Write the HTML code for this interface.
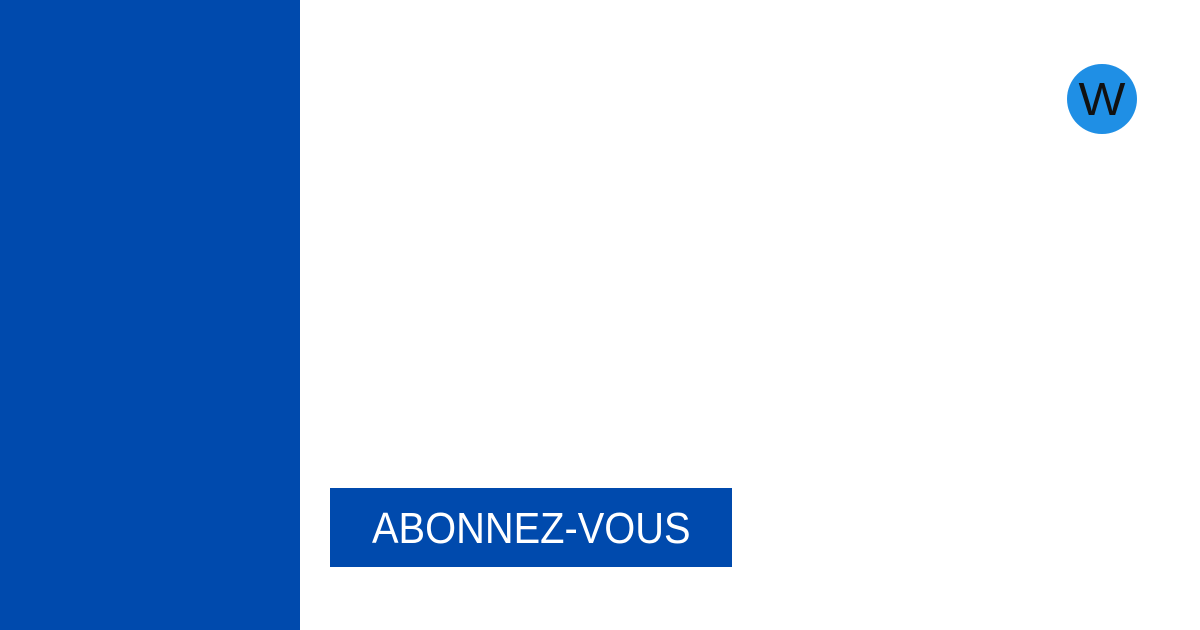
<!DOCTYPE html>
<html><head><style>
html,body{margin:0;padding:0}
body{width:1200px;height:630px;position:relative;background:#fff;overflow:hidden;font-family:"Liberation Sans",sans-serif}
.side{position:absolute;left:0;top:0;width:300px;height:630px;background:#004aad}
.btn{position:absolute;left:330px;top:488px;width:402px;height:79px;background:#004aad}
.btn span{position:absolute;left:42px;top:16px;font-size:44px;line-height:50px;color:#fff;white-space:nowrap;transform:scaleX(0.905);transform-origin:left center}
.logo{position:absolute;left:1067px;top:64px;width:70px;height:70px;border-radius:50%;background:#1f8fe5}
.logo span{position:absolute;left:0;top:0;width:70px;text-align:center;font-size:46px;line-height:70px;color:#111;transform:scaleX(1.08)}
</style></head><body>
<div class="side"></div>
<div class="logo"><span>W</span></div>
<div class="btn"><span>ABONNEZ-VOUS</span></div>
</body></html>
